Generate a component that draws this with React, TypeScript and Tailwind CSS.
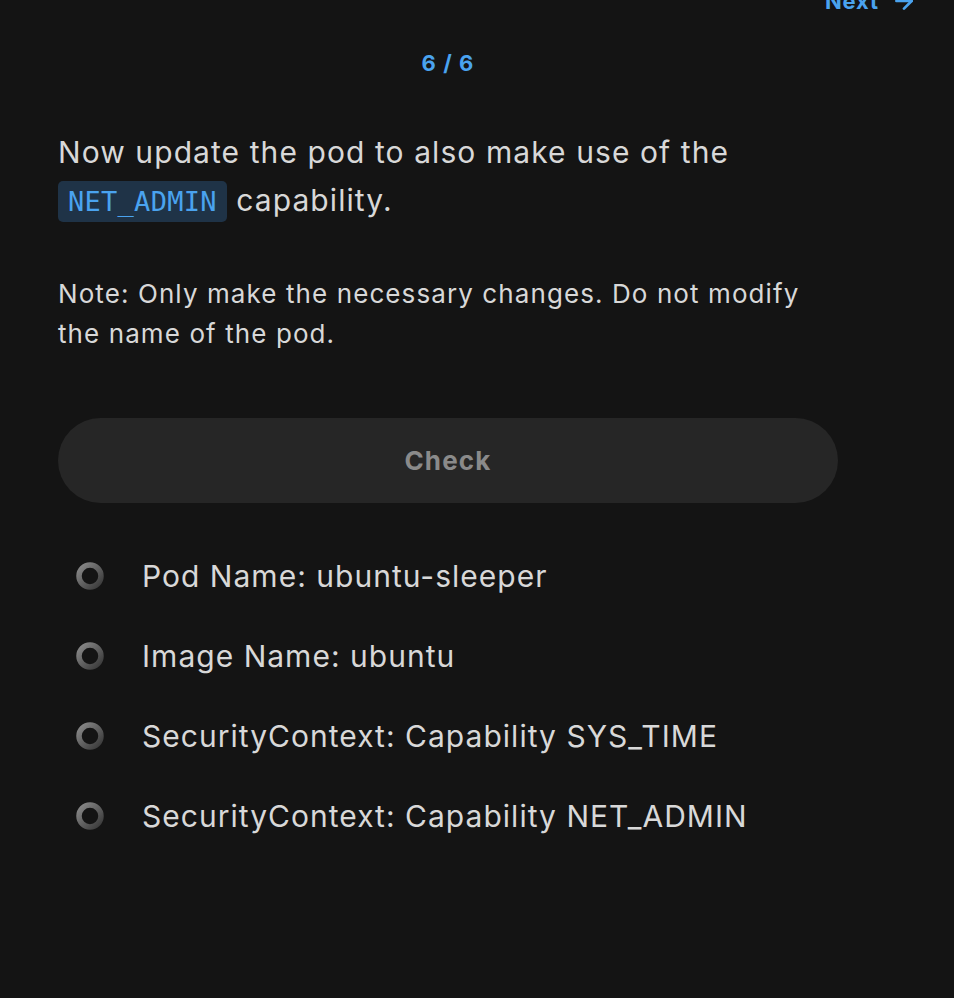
import { ArrowRight } from "lucide-react";

const checks = [
  "Pod Name: ubuntu-sleeper",
  "Image Name: ubuntu",
  "SecurityContext: Capability SYS_TIME",
  "SecurityContext: Capability NET_ADMIN",
];

const PendingRing = () => (
  <svg width="30" height="30" viewBox="0 0 30 30" className="shrink-0">
    <defs>
      <linearGradient id="ring" x1="0" y1="0" x2="1" y2="1">
        <stop offset="0%" stopColor="#8a8a8a" />
        <stop offset="100%" stopColor="#383838" />
      </linearGradient>
    </defs>
    <circle cx="15" cy="15" r="11" fill="none" stroke="url(#ring)" strokeWidth="5.5" />
  </svg>
);

const App = () => {
  return (
    <div
      className="flex flex-col min-h-screen w-full bg-[#141414] text-[#d8d8d8] overflow-hidden"
      style={{ fontFamily: "Inter, 'Noto Sans', sans-serif" }}
    >
      <div className="flex justify-end pr-[37px] -mt-[16px]">
        <button className="flex items-center gap-3 text-[22px] font-bold tracking-[0.04em] text-[#4aa3ef] leading-[34px]">
          Next
          <ArrowRight className="w-[26px] h-[26px]" strokeWidth={2.5} />
        </button>
      </div>

      <div className="w-[780px] ml-[58px]">
        <div className="text-center text-[22px] font-bold tracking-[0.05em] text-[#4aa3ef] leading-[30px] mt-[30px]">
          6 / 6
        </div>

        <p className="mt-[50px] text-[30px] leading-[48px] tracking-[0.036em]">
          Now update the pod to also make use of the{" "}
          <code
            className="rounded-[5px] bg-[#1f3347] px-[10px] py-[5px] text-[27px] tracking-[0.01em] text-[#4aa3ef]"
            style={{ fontFamily: "'DejaVu Sans Mono', monospace" }}
          >
            NET_ADMIN
          </code>{" "}
          capability.
        </p>

        <p className="mt-[48px] text-[26px] leading-[40px] tracking-[0.042em]">
          Note: Only make the necessary changes. Do not modify the name of the pod.
        </p>

        <button className="mt-[64px] flex h-[85px] w-full items-center justify-center rounded-full bg-[#262626] text-[26px] font-bold tracking-[0.045em] text-[#8a8a8a]">
          Check
        </button>

        <ul className="mt-[51px] flex flex-col gap-[36px]">
          {checks.map((c) => (
            <li key={c} className="flex items-center h-[44px]">
              <div className="w-[84px] pl-[17px]">
                <PendingRing />
              </div>
              <span className="text-[30px] leading-[44px] tracking-[0.034em]">{c}</span>
            </li>
          ))}
        </ul>
      </div>
    </div>
  );
};

export default App;
